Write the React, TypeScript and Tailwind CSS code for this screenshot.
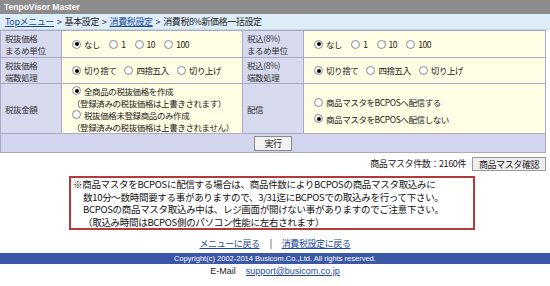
import React from 'react';

const jp = { fontFamily: '"Noto Sans CJK JP", "Noto Sans", sans-serif' };

const Radio: React.FC<{ checked?: boolean; label: string }> = ({ checked, label }) => (
  <span className="flex items-center gap-[3px] whitespace-nowrap">
    <span className="flex h-[9px] w-[9px] shrink-0 items-center justify-center rounded-full border border-[#8a8a8a] bg-white">
      {checked && <span className="h-[4px] w-[4px] rounded-full bg-black" />}
    </span>
    <span>{label}</span>
  </span>
);

const Label: React.FC<{ children: React.ReactNode; className?: string }> = ({ children, className }) => (
  <div className={`flex flex-col justify-center whitespace-nowrap border-r border-b border-[#a9abc4] bg-[#d7d9ef] px-[4px] leading-[12px] text-[#333] ${className ?? ''}`}>
    {children}
  </div>
);

const Value: React.FC<{ children: React.ReactNode; className?: string }> = ({ children, className }) => (
  <div className={`flex items-center whitespace-nowrap border-r border-b border-[#a9abc4] bg-[#fffde3] px-[10px] text-[#222] ${className ?? ''}`}>
    {children}
  </div>
);

export default function App() {
  return (
    <div className="w-[550px] bg-white text-[8.5px] tracking-[-0.4px]" style={jp}>
      <div className="flex h-[14px] items-center bg-[#8c8c8c] px-[4px] text-[8.5px] font-bold tracking-normal text-white" style={{ fontFamily: '"Liberation Sans", sans-serif' }}>
        TenpoVisor Master
      </div>
      <div className="flex h-[16px] items-center gap-[3px] border-b border-[#c6d6e4] bg-[#deedf8] px-[5px] text-[9px] text-[#222]">
        <span className="text-[#1a4a9a] underline">Topメニュー</span>
        <span>&gt;</span>
        <span>基本設定</span>
        <span>&gt;</span>
        <span className="text-[#1a4a9a] underline">消費税設定</span>
        <span>&gt;</span>
        <span>消費税8%新価格一括設定</span>
      </div>

      <div className="grid w-[546px] grid-cols-[61px_181px_61px_1fr] border-t border-l border-[#a9abc4]">
        <Label className="h-[27px]">
          <span>税抜価格</span>
          <span>まるめ単位</span>
        </Label>
        <Value className="gap-[9px]">
          <Radio checked label="なし" />
          <Radio label="1" />
          <Radio label="10" />
          <Radio label="100" />
        </Value>
        <Label>
          <span>税込(8%)</span>
          <span>まるめ単位</span>
        </Label>
        <Value className="gap-[9px]">
          <Radio checked label="なし" />
          <Radio label="1" />
          <Radio label="10" />
          <Radio label="100" />
        </Value>

        <Label className="h-[26px]">
          <span>税抜価格</span>
          <span>端数処理</span>
        </Label>
        <Value className="gap-[8px]">
          <Radio checked label="切り捨て" />
          <Radio label="四捨五入" />
          <Radio label="切り上げ" />
        </Value>
        <Label>
          <span>税込(8%)</span>
          <span>端数処理</span>
        </Label>
        <Value className="gap-[8px]">
          <Radio checked label="切り捨て" />
          <Radio label="四捨五入" />
          <Radio label="切り上げ" />
        </Value>

        <Label className="h-[50px]">
          <span>税抜金額</span>
        </Label>
        <Value className="flex-col items-start justify-center px-[8px] leading-[12px]">
          <Radio checked label="全商品の税抜価格を作成" />
          <span>（登録済みの税抜価格は上書きされます）</span>
          <Radio label="税抜価格未登録商品のみ作成" />
          <span>（登録済みの税抜価格は上書きされません）</span>
        </Value>
        <Label>
          <span>配信</span>
        </Label>
        <Value className="flex-col items-start justify-center gap-[4px] pt-[4px]">
          <Radio label="商品マスタをBCPOSへ配信する" />
          <Radio checked label="商品マスタをBCPOSへ配信しない" />
        </Value>

        <div className="col-span-4 flex h-[19px] items-center justify-center border-r border-b border-[#a9abc4] bg-[#d2d5ed]">
          <button className="h-[15px] w-[38px] border border-[#8a8a8a] bg-[#f2f2f2] text-[9px] text-[#222]">実行</button>
        </div>
      </div>

      <div className="flex h-[19px] w-[546px] items-center justify-end gap-[6px] pt-[2px] text-[9px] text-[#222]">
        <span>商品マスタ件数：2160件</span>
        <button className="h-[14px] w-[74px] border border-[#9a9a9a] bg-[#efefef] text-[9px] text-[#222]">商品マスタ確認</button>
      </div>

      <div className="mt-[4px] ml-[69px] w-[406px] border-2 border-[#b23a3a] px-[2px] text-[9.5px] leading-[12.5px] tracking-[-0.3px] text-[#111]">
        <div>※商品マスタをBCPOSに配信する場合は、商品件数によりBCPOSの商品マスタ取込みに</div>
        <div className="pl-[10px]">数10分～数時間要する事がありますので、3/31迄にBCPOSでの取込みを行って下さい。</div>
        <div className="pl-[10px]">BCPOSの商品マスタ取込み中は、レジ画面が開けない事がありますのでご注意下さい。</div>
        <div className="pl-[10px]">（取込み時間はBCPOS側のパソコン性能に左右されます）</div>
      </div>

      <div className="mt-[8px] flex h-[12px] items-center justify-center gap-[10px] text-[9px]">
        <span className="text-[#1a4a9a] underline">メニューに戻る</span>
        <span className="text-[#222]">|</span>
        <span className="text-[#1a4a9a] underline">消費税設定に戻る</span>
      </div>

      <div className="mt-[3px] flex h-[11px] items-center justify-center bg-[#3b57a6] text-[7.5px] tracking-normal text-white" style={{ fontFamily: '"Liberation Sans", sans-serif' }}>
        Copyright(c) 2002-2014 Busicom.Co.,Ltd. All rights reserved.
      </div>

      <div className="flex h-[16px] items-center justify-center gap-[10px] text-[9px] tracking-normal" style={{ fontFamily: '"Liberation Sans", sans-serif' }}>
        <span className="text-[#222]">E-Mail</span>
        <span className="text-[#1a4a9a] underline">support@busicom.co.jp</span>
      </div>
    </div>
  );
}
